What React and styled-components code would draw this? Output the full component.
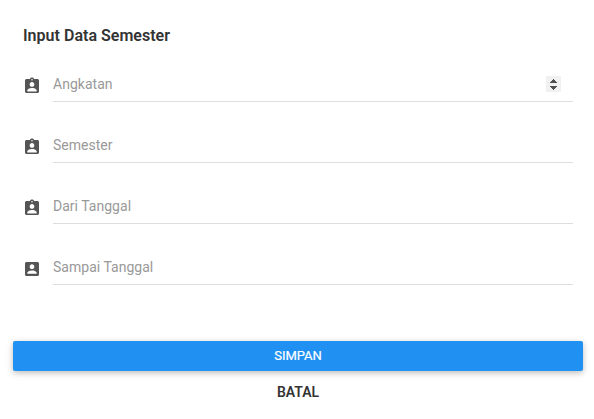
import React from "react";
import styled, { createGlobalStyle } from "styled-components";

const GlobalStyle = createGlobalStyle`
  * { box-sizing: border-box; }
  body { margin: 0; background: #fff; overflow: hidden; font-family: Roboto, "Liberation Sans", sans-serif; }
`;

const Card = styled.form`
  width: 594px;
  height: 419px;
  padding: 26px 11px 0 13px;
  display: flex;
  flex-direction: column;
`;

const Title = styled.h1`
  margin: 0 0 0 10px;
  font-size: 16px;
  line-height: 20px;
  font-weight: 600;
  letter-spacing: 0.02px;
  color: #333;
`;

const Fields = styled.div`
  margin: 24px 10px 0;
  display: grid;
  grid-auto-rows: 32px;
  row-gap: 29px;
`;

const Field = styled.label`
  display: grid;
  grid-template-columns: 18px 1fr;
  column-gap: 12px;
`;

const FieldIcon = styled.svg`
  width: 20px;
  height: 20px;
  margin: 6px 0 0 -1px;
  fill: #555;
`;

const Control = styled.span`
  display: flex;
  align-items: flex-start;
  justify-content: space-between;
  border-bottom: 1px solid #ddd;
`;

const Placeholder = styled.span`
  margin-top: 5px;
  font-size: 14px;
  line-height: 18px;
  letter-spacing: 0.02px;
  color: #999;
`;

const Spinner = styled.svg`
  width: 15px;
  height: 16px;
  margin: 6px 12px 0 0;
`;

const Button = styled.button`
  width: 570px;
  height: 30px;
  padding: 0;
  border: 0;
  border-radius: 2px;
  font: 500 13px/30px Roboto, "Liberation Sans", sans-serif;
  color: #fff;
  background: #2091f2;
  box-shadow: 0 2px 5px rgba(0, 0, 0, 0.16), 0 2px 10px rgba(0, 0, 0, 0.12);
`;

const SaveButton = styled(Button)`
  font-weight: 400;
  -webkit-text-stroke: 0.2px #fff;
`;

const Actions = styled.div`
  margin-top: 56px;
`;

const CancelButton = styled(Button)`
  margin-top: 6px;
  font-size: 14px;
  font-weight: 600;
  color: #333;
  background: transparent;
  box-shadow: none;
`;

const labels = ["Angkatan", "Semester", "Dari Tanggal", "Sampai Tanggal"];

function PersonIcon({ clipboard }) {
  return (
    <FieldIcon viewBox="-0.857 -0.857 25.714 25.714">
      <path
        d={
          clipboard
            ? "M19 3h-4.18C14.4 1.84 13.3 1 12 1c-1.3 0-2.4.84-2.82 2H5c-1.1 0-2 .9-2 2v14c0 1.1.9 2 2 2h14c1.1 0 2-.9 2-2V5c0-1.1-.9-2-2-2zm-7 0c.55 0 1 .45 1 1s-.45 1-1 1-1-.45-1-1 .45-1 1-1zm0 4c1.66 0 3 1.34 3 3s-1.34 3-3 3-3-1.34-3-3 1.34-3 3-3zm6 12H6v-1.4c0-2 4-3.1 6-3.1s6 1.1 6 3.1V19z"
            : "M3 5v14c0 1.1.89 2 2 2h14c1.1 0 2-.9 2-2V5c0-1.1-.9-2-2-2H5c-1.11 0-2 .9-2 2zm12 4c0 1.66-1.34 3-3 3s-3-1.34-3-3 1.34-3 3-3 3 1.34 3 3zm-9 8c0-2 4-3.1 6-3.1s6 1.1 6 3.1v1H6v-1z"
        }
      />
    </FieldIcon>
  );
}

export default function App() {
  return (
    <>
      <GlobalStyle />
      <Card>
        <Title>Input Data Semester</Title>
        <Fields>
          {labels.map((label, i) => (
            <Field key={label}>
              <PersonIcon clipboard={i < 3} />
              <Control>
                <Placeholder>{label}</Placeholder>
                {i === 0 && (
                  <Spinner viewBox="0 0 15 16" shapeRendering="crispEdges">
                    <path fill="#f1f1f1" d="M0 0h15v16H0z" />
                    <path
                      fill="#505050"
                      d="M7 3h1v1h1v1h1v1h1v1H4V6h1V5h1V4h1zM4 10h7v1h-1v1H9v1H8v1H7v-1H6v-1H5v-1H4z"
                    />
                  </Spinner>
                )}
              </Control>
            </Field>
          ))}
        </Fields>
        <Actions>
          <SaveButton type="button">SIMPAN</SaveButton>
          <CancelButton type="button">BATAL</CancelButton>
        </Actions>
      </Card>
    </>
  );
}
